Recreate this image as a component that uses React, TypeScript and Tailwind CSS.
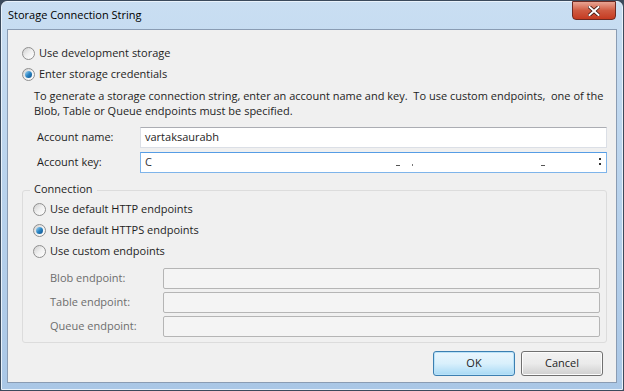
import React from 'react';

function Radio({ checked }: { checked?: boolean }) {
  return (
    <span className="relative inline-flex w-[13px] h-[13px] shrink-0 rounded-full border border-[#8f8f8f] bg-gradient-to-br from-[#cfcfcf] via-[#f0f0f0] to-[#ffffff] items-center justify-center">
      {checked && (
        <span className="w-[7px] h-[7px] rounded-full bg-gradient-to-br from-[#a6dcf6] via-[#2b86c4] to-[#0d4f8a]" />
      )}
    </span>
  );
}

function RadioRow({ label, checked }: { label: string; checked?: boolean }) {
  return (
    <div className="flex items-center gap-[4px] h-[21px]">
      <Radio checked={checked} />
      <span>{label}</span>
    </div>
  );
}

export default function App() {
  return (
    <div
      className="w-[624px] h-[391px] bg-[#3b4a5c] p-px text-[11px] text-[#1e1e1e]"
      style={{ fontFamily: '"Open Sans", "Noto Sans", sans-serif' }}
    >
      <div className="w-full h-full rounded-t-[6px] bg-gradient-to-b from-[#c9def2] via-[#b8d2ec] to-[#aac7e6] border border-[#e9f2fb] flex flex-col">
        {/* Title bar */}
        <div className="h-[27px] flex items-start justify-between pl-[6px] pr-[6px]">
          <span className="mt-[5px] text-[11px] text-black">Storage Connection String</span>
          <div className="w-[44px] h-[19px] -mt-px rounded-b-[4px] border border-[#6e2a22] bg-gradient-to-b from-[#e8a493] via-[#cf5a41] to-[#c53a20] flex items-center justify-center">
            <svg width="12" height="10" viewBox="0 0 12 10">
              <path d="M1.5 1 L10.5 9 M10.5 1 L1.5 9" stroke="#3a1510" strokeWidth="3.6" strokeLinecap="square" />
              <path d="M1.5 1 L10.5 9 M10.5 1 L1.5 9" stroke="#ffffff" strokeWidth="2" strokeLinecap="square" />
            </svg>
          </div>
        </div>

        {/* Client area */}
        <div className="flex-1 mx-[5px] mb-[6px] border border-[#8a9cb3] bg-[#f0f0f0] pl-[14px] pr-[8px] pt-[13px] flex flex-col">
          <RadioRow label="Use development storage" />
          <RadioRow label="Enter storage credentials" checked />

          <p className="ml-[12px] mt-[3px] leading-[15px] whitespace-nowrap">
            To generate a storage connection string, enter an account name and key.&nbsp; To use custom endpoints,&nbsp; one of the
            <br />
            Blob, Table or Queue endpoints must be specified.
          </p>

          <div className="mt-[9px] flex items-center h-[21px]">
            <span className="ml-[15px] w-[103px]">Account name:</span>
            <div className="flex-1 mr-[1px] h-[21px] border border-[#dbdfe6] border-t-[#abadb3] bg-white flex items-center px-[4px]">
              vartaksaurabh
            </div>
          </div>
          <div className="mt-[4px] flex items-center h-[21px]">
            <span className="ml-[15px] w-[103px]">Account key:</span>
            <div className="relative flex-1 mr-[1px] h-[21px] border border-[#7eb4ea] border-t-[#569de5] bg-white flex items-center px-[4px]">
              <span className="text-[#333]">C</span>
              <span className="absolute left-[255px] top-[12px] w-[4px] h-px bg-[#555]" />
              <span className="absolute left-[271px] top-[11px] w-px h-[2px] bg-[#777]" />
              <span className="absolute left-[400px] top-[12px] w-[4px] h-px bg-[#555]" />
              <span className="absolute right-[5px] top-[5px] w-[2px] h-[2px] bg-[#333]" />
              <span className="absolute right-[5px] top-[10px] w-[2px] h-[2px] bg-[#333]" />
            </div>
          </div>

          {/* Connection group */}
          <div className="relative mt-[17px] mr-[1px] h-[153px] rounded-[3px] border border-[#dcdcdc] pl-[10px] pt-[8px]">
            <span className="absolute -top-[10px] left-[7px] px-[4px] bg-[#f0f0f0]">Connection</span>
            <RadioRow label="Use default HTTP endpoints" />
            <RadioRow label="Use default HTTPS endpoints" checked />
            <RadioRow label="Use custom endpoints" />

            <div className="mt-[6px] flex flex-col gap-[3px] pr-[6px] text-[#6d6d6d]">
              {['Blob endpoint:', 'Table endpoint:', 'Queue endpoint:'].map((l) => (
                <div key={l} className="flex items-center h-[21px]">
                  <span className="ml-[17px] w-[113px]">{l}</span>
                  <div className="flex-1 h-[21px] border border-[#b5b5b5] rounded-[2px] bg-[#f4f4f4]" />
                </div>
              ))}
            </div>
          </div>

          {/* Buttons */}
          <div className="mt-[8px] mr-[5px] flex justify-end gap-[6px]">
            <button className="w-[82px] h-[25px] rounded-[3px] border border-[#3c7fb1] bg-gradient-to-b from-[#eaf6fd] via-[#d9f0fc] to-[#a7d9f5] shadow-[inset_0_0_0_1px_#b9e2f8]">
              OK
            </button>
            <button className="w-[82px] h-[25px] rounded-[3px] border border-[#707070] bg-gradient-to-b from-[#f2f2f2] via-[#ebebeb] to-[#cfcfcf] shadow-[inset_0_0_0_1px_#fcfcfc]">
              Cancel
            </button>
          </div>
        </div>
      </div>
    </div>
  );
}
